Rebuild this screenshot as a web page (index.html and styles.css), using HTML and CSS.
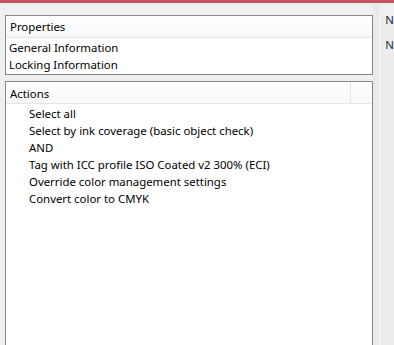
FILE: index.html
```html
<!DOCTYPE html>
<html lang="en">
<head>
    <meta charset="UTF-8">
    <title>Fixup</title>
    <link rel="stylesheet" href="styles.css">
</head>
<body>
    <!-- Window frame -->
    <div class="frame-top"></div>

    <div class="main">
        <div class="left">
            <!-- Properties -->
            <div class="box props">
                <div class="box-header">
                    <div class="col-main">Properties</div>
                </div>
                <div class="row">General Information</div>
                <div class="row">Locking Information</div>
            </div>

            <!-- Actions -->
            <div class="box actions">
                <div class="box-header">
                    <div class="col-main">Actions</div>
                    <div class="col-rest"></div>
                </div>
                <div class="row action">Select all</div>
                <div class="row action">Select by ink coverage (basic object check)</div>
                <div class="row action">AND</div>
                <div class="row action">Tag with ICC profile ISO Coated v2 300% (ECI)</div>
                <div class="row action">Override color management settings</div>
                <div class="row action">Convert color to CMYK</div>
            </div>
        </div>

        <div class="splitter"></div>

        <div class="right">
            <div class="label first">N</div>
            <div class="label">N</div>
        </div>
    </div>
</body>
</html>
```

FILE: styles.css
```css
/* General */
body {
    margin: 0;
    background: #f0f0f0;
    font-family: "Noto Sans", sans-serif;
    font-size: 11.4px;
    color: #000;
    height: 345px;
    overflow: hidden;
}

.frame-top {
    height: 3px;
    background: #c75266;
}

.main {
    display: flex;
    padding-left: 5px;
    height: 342px;
}

/* Left column */
.left {
    width: 369px;
    display: flex;
    flex-direction: column;
    gap: 6px;
    padding-top: 12px;
}

.box {
    background: #fff;
    border: 1px solid #828790;
}

.props {
    height: 58px;
}

.actions {
    flex: 1;
    border-bottom: none;
}

.box-header {
    display: flex;
    height: 21px;
    line-height: 22px;
    background: linear-gradient(#ffffff, #f7f8f9);
    border-bottom: 1px solid #e5e5e5;
}

.col-main {
    width: 340px;
    padding-left: 4px;
    border-right: 1px solid #e5e5e5;
}

.props .col-main {
    border-right: none;
    flex: 1;
}

.actions .box-header {
    line-height: 24px;
    margin-bottom: 1px;
}

.col-rest {
    flex: 1;
}

.row {
    height: 17px;
    line-height: 17px;
    padding-left: 3px;
    white-space: nowrap;
}

.props .box-header + .row {
    margin-top: 1px;
}

.row.action {
    padding-left: 23px;
}

/* Splitter and right panel */
.splitter {
    width: 6px;
    background: #e9e9ec;
}

.right {
    flex: 1;
    margin-top: 13px;
    border-left: 1px solid #fafafa;
    background: #ececec;
    padding-left: 5px;
}

.label {
    color: #1e2b3a;
    line-height: 17px;
}

.label.first {
    line-height: 8px;
    margin-bottom: 12px;
}
```
